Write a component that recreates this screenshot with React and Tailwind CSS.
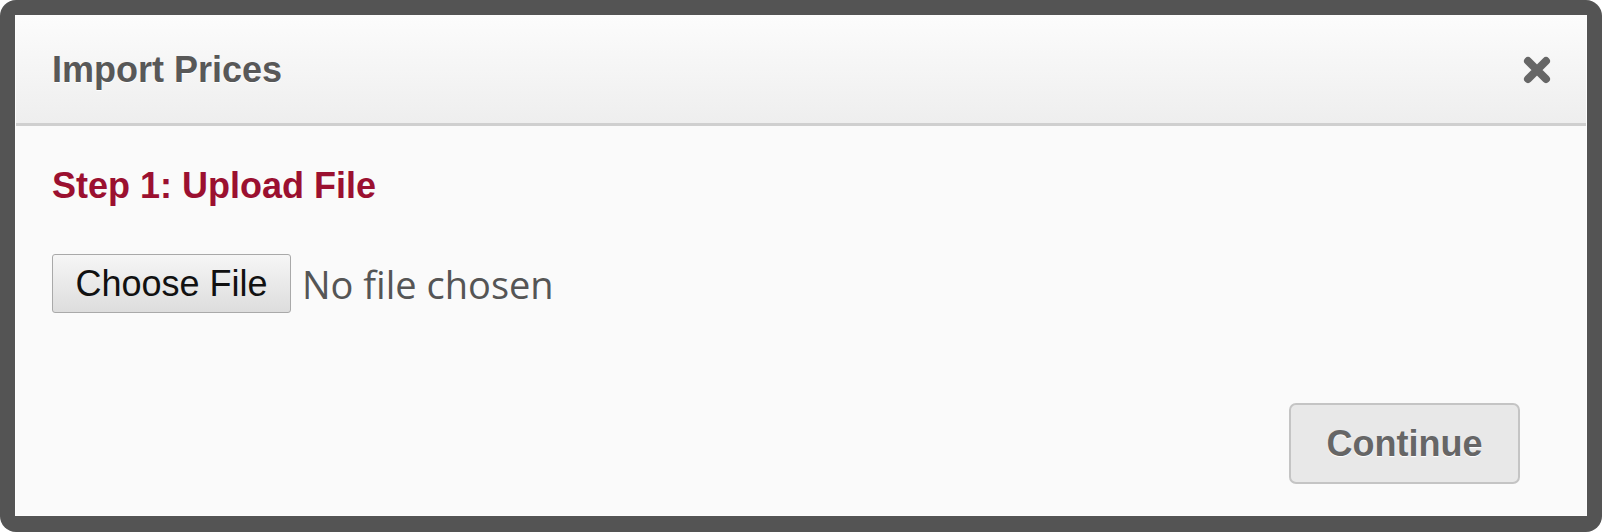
import React from 'react';

const CloseIcon = () => (
  <svg width="30" height="30" viewBox="0 0 30 30" className="blur-[0.6px]">
    <path d="M6 6 L24 24 M24 6 L6 24" stroke="#666" strokeWidth="8" strokeLinecap="round" />
  </svg>
);

export default function App() {
  return (
    <div className="h-[532px] w-[1602px] bg-white font-['Liberation_Sans',Arial,sans-serif]">
      <div className="flex h-full flex-col rounded-[16px] bg-[#545454] p-[15px] pb-[16px]">
        <div className="flex flex-1 flex-col border border-[#fdfdfd] bg-[#fafafa]">
          <div className="flex h-[110px] items-center justify-between border-b-[3px] border-[#cfcfcf] bg-gradient-to-b from-[#fcfcfc] to-[#eeeeee] pl-[36px] pr-[34px]">
            <h1 className="text-[36px] font-bold leading-none text-[#585858] [text-shadow:0_1px_0_#fff]">Import Prices</h1>
            <button className="flex items-center justify-center">
              <CloseIcon />
            </button>
          </div>

          <div className="flex flex-1 flex-col pl-[36px] pr-[66px] pt-[42px]">
            <h2 className="text-[36px] font-bold leading-none text-[#9b1030]">Step 1: Upload File</h2>

            <div className="mt-[50px] flex items-center gap-[11px]">
              <div className="flex h-[59px] w-[239px] items-center justify-center rounded-[3px] border border-[#a9a9a9] bg-gradient-to-b from-[#f6f6f6] to-[#dddddd] text-[36px] leading-none text-[#111]">
                Choose File
              </div>
              <span className="font-['Open_Sans',sans-serif] text-[38px] leading-none text-[#555]">No file chosen</span>
            </div>

            <div className="mt-[90px] flex justify-end">
              <button className="flex h-[81px] w-[231px] items-center justify-center rounded-[7px] border-2 border-[#c4c4c4] bg-[#e8e8e8] text-[36px] font-bold leading-none text-[#666] [text-shadow:0_1px_1px_#fff]">
                Continue
              </button>
            </div>
          </div>
        </div>
      </div>
    </div>
  );
}
